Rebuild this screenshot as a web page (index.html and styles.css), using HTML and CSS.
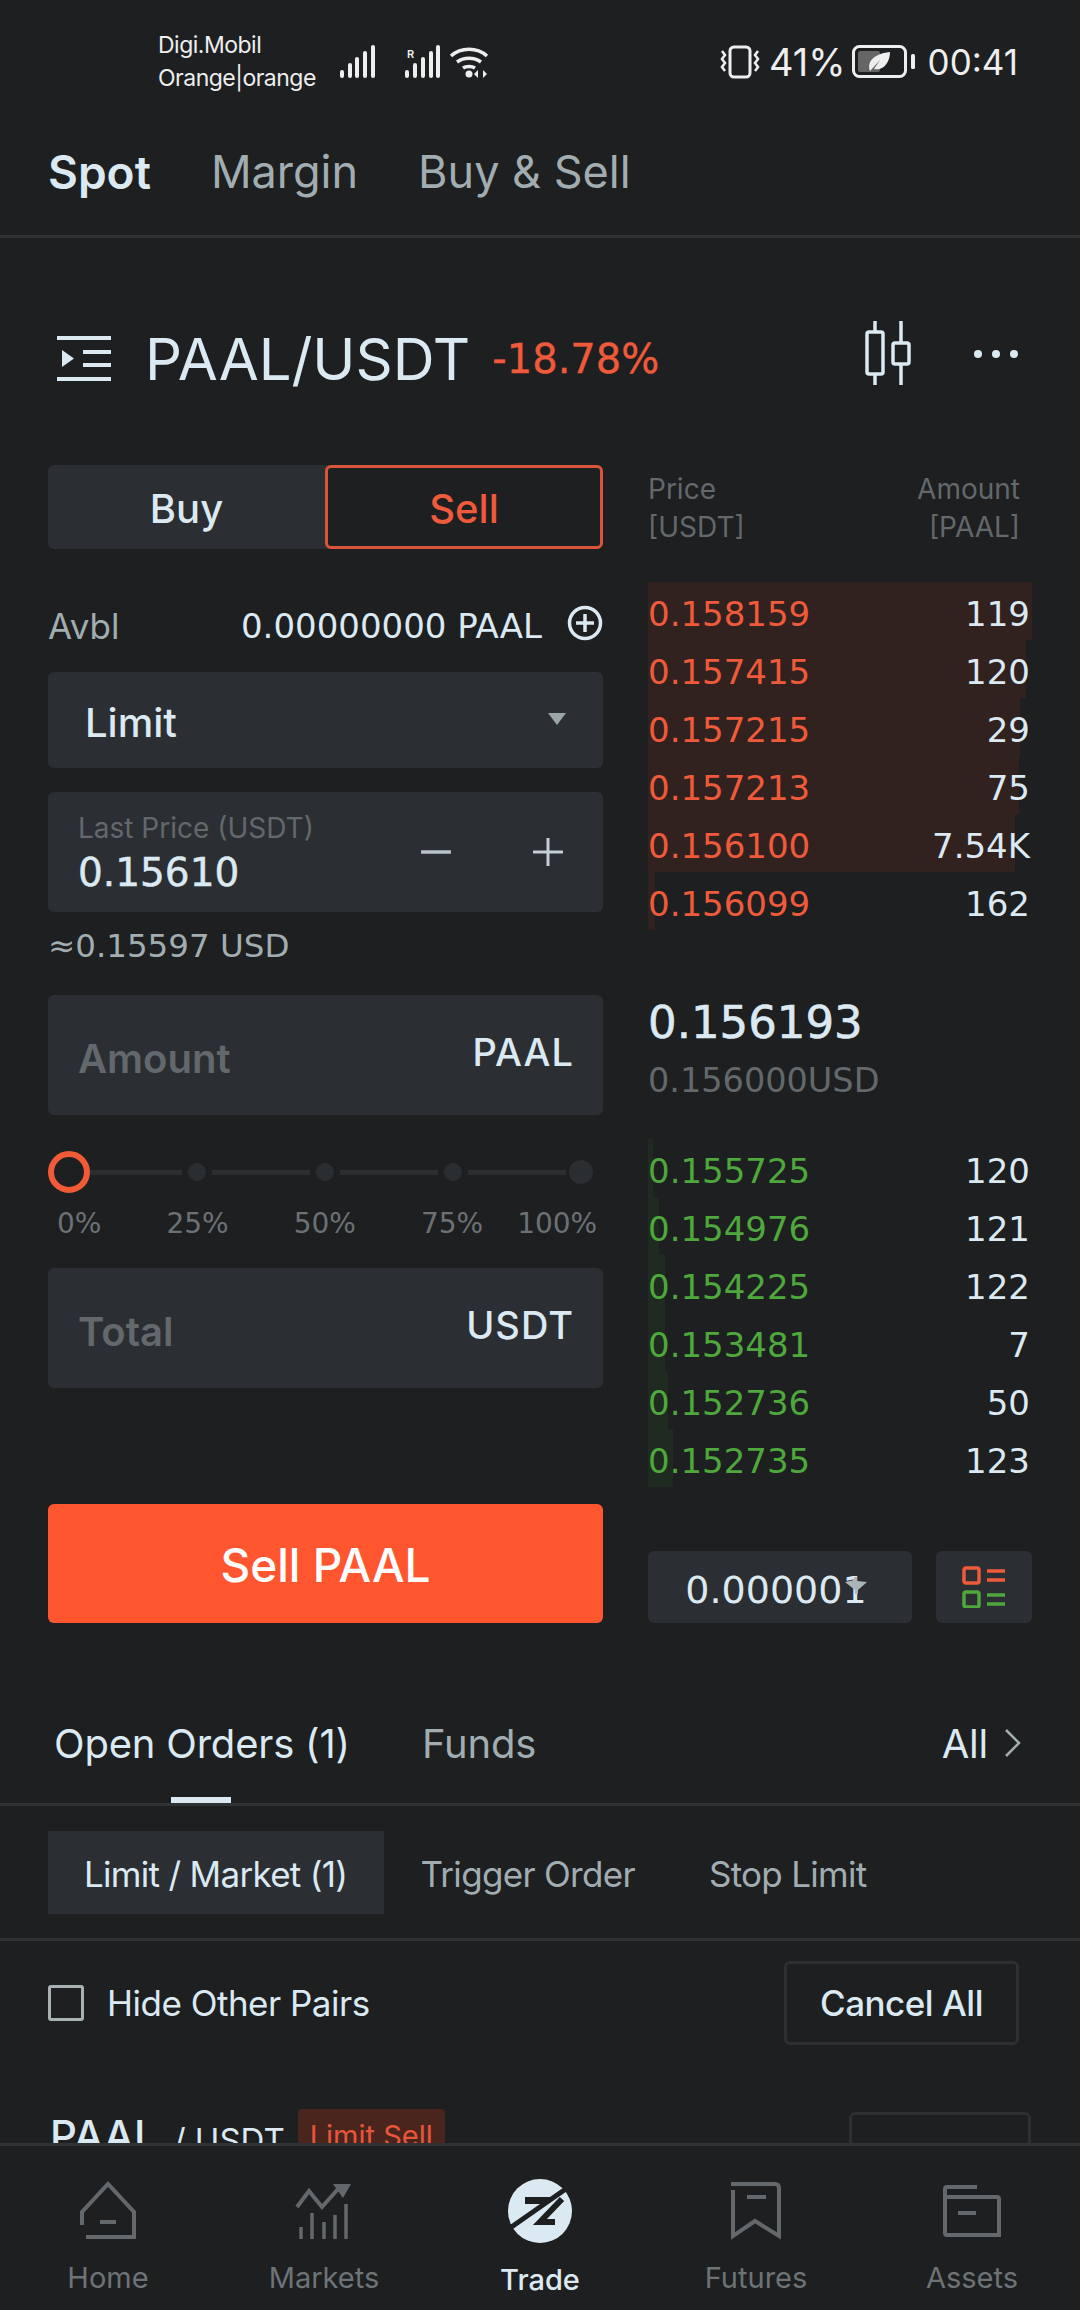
FILE: index.html
```html
<!DOCTYPE html>
<html lang="en">
<head>
  <meta charset="UTF-8" />
  <meta name="viewport" content="width=device-width, initial-scale=1.0" />
  <title>PAAL/USDT Spot</title>
  <link rel="stylesheet" href="styles.css">
</head>
<body>
  <div class="screen">
    <div class="content">
      <!-- Status bar -->
      <div class="statusbar">
        <div class="carriers">
          <div>Digi.Mobil</div>
          <div>Orange|orange</div>
        </div>
        <svg class="sb-signals" width="155" height="40" viewBox="340 42 155 40">
          <g fill="#eee">
            <rect x="340" y="70" width="4" height="8" rx="2"/>
            <rect x="348" y="63" width="4" height="15" rx="2"/>
            <rect x="355" y="57" width="4" height="21" rx="2"/>
            <rect x="363" y="51" width="4" height="27" rx="2"/>
            <rect x="371" y="45" width="4" height="33" rx="2"/>
            <rect x="405" y="70" width="4" height="8" rx="2"/>
            <rect x="413" y="63" width="4" height="15" rx="2"/>
            <rect x="421" y="57" width="4" height="21" rx="2"/>
            <rect x="429" y="51" width="4" height="27" rx="2"/>
            <rect x="436" y="45" width="4" height="33" rx="2"/>
            <circle cx="469" cy="74" r="3.5"/>
            <path d="M478 78v-8l-4 4zM483 70v8l4-4z"/>
          </g>
          <text x="407" y="58" class="sb-roam">R</text>
          <g fill="none" stroke="#eee" stroke-width="3.5">
            <path d="M451 56c10-9 26-9 36 0"/>
            <path d="M457 62c7-5 17-5 24 0"/>
            <path d="M463 68c3-2 9-2 12 0"/>
          </g>
        </svg>
        <div class="sb-right">
          <svg width="42" height="36" viewBox="724 44 42 36" fill="none" stroke="#eee" stroke-width="3">
            <rect x="735" y="47" width="20" height="30" rx="4"/>
            <path d="M727 51l3 4-3 4 3 4-3 4 3 4M763 51l-3 4 3 4-3 4 3 4-3 4" stroke-width="2.5"/>
          </svg>
          <span class="sb-pct">41%</span>
          <svg width="64" height="34" viewBox="853 46 64 34">
            <rect x="854.5" y="47.5" width="52" height="30" rx="6" fill="none" stroke="#eee" stroke-width="3"/>
            <rect x="859" y="52" width="22" height="21" rx="2" fill="#666"/>
            <path d="M871 72c-3-8 2-17 20-19 0 11-7 19-16 17l6-9-9 10z" fill="#eee"/>
            <rect x="912" y="55" width="4" height="15" rx="1.5" fill="#eee"/>
          </svg>
          <span class="sb-time">00:41</span>
        </div>
      </div>

      <!-- Product tabs -->
      <div class="top-tabs">
        <span class="active">Spot</span>
        <span>Margin</span>
        <span>Buy &amp; Sell</span>
      </div>

      <!-- Pair header -->
      <div class="pair-row">
        <svg width="54" height="46" viewBox="57 332 54 46" fill="#dbe9f2">
          <rect x="57" y="332" width="54" height="4"/>
          <rect x="83" y="346" width="28" height="4"/>
          <rect x="83" y="359" width="28" height="4"/>
          <rect x="57" y="373" width="54" height="4"/>
          <path d="M62 346l12 8.500-12 8.500z"/>
        </svg>
        <span class="pair-name">PAAL/USDT</span>
        <span class="pair-change num">-18.78%</span>
        <svg class="pair-candles" width="48" height="64" viewBox="864 322 48 64" fill="none" stroke="#dbe9f2" stroke-width="3.500">
          <rect x="867" y="333" width="16" height="42" rx="2"/>
          <path d="M875 322v11M875 375v11"/>
          <rect x="893" y="344" width="16" height="21" rx="2"/>
          <path d="M901 322v22M901 365v21"/>
        </svg>
        <div class="pair-more"><i></i><i></i><i></i></div>
      </div>

      <div class="trade">
        <!-- Order form -->
        <div class="form">
          <div class="side-switch">
            <div class="side">Buy</div>
            <div class="side sell">Sell</div>
          </div>
          <div class="avbl">
            <span class="avbl-label">Avbl</span>
            <span class="avbl-value num">0.00000000 PAAL</span>
            <svg width="36" height="36" viewBox="0 0 36 36" fill="none" stroke="#dbe9f2" stroke-width="3.500">
              <circle cx="18" cy="18" r="15.500"/>
              <path d="M18 9v18M9 18h18"/>
            </svg>
          </div>
          <div class="box select">
            <span>Limit</span>
            <i class="caret"></i>
          </div>
          <div class="box price">
            <div>
              <div class="price-label">Last Price (USDT)</div>
              <div class="price-value num">0.15610</div>
            </div>
            <div class="steppers">
              <svg width="30" height="30" viewBox="0 0 30 30"><path d="M0 15h30" stroke="#b9c2c6" stroke-width="3.500"/></svg>
              <svg width="30" height="30" viewBox="0 0 30 30"><path d="M0 15h30M15 1v28" stroke="#c5ced2" stroke-width="3"/></svg>
            </div>
          </div>
          <div class="usd-note num">≈0.15597 USD</div>
          <div class="box input">
            <span class="placeholder">Amount</span>
            <span class="unit">PAAL</span>
          </div>
          <div class="slider">
            <div class="slider-track">
              <i class="thumb"></i>
              <b class="first"></b><i class="dot"></i>
              <b></b><i class="dot"></i>
              <b></b><i class="dot"></i>
              <b></b><i class="dot end"></i>
            </div>
            <div class="slider-labels num">
              <span>0%</span><span>25%</span><span>50%</span><span>75%</span><span>100%</span>
            </div>
          </div>
          <div class="box input">
            <span class="placeholder">Total</span>
            <span class="unit">USDT</span>
          </div>
          <div class="submit">Sell PAAL</div>
        </div>

        <!-- Order book -->
        <div class="book">
          <div class="book-head">
            <div>Price<br>[USDT]</div>
            <div class="right">Amount<br>[PAAL]</div>
          </div>
          <div class="rows asks num">
            <div class="row"><i class="bar" style="width:384px"></i><span>0.158159</span><em>119</em></div>
            <div class="row"><i class="bar" style="width:378px"></i><span>0.157415</span><em>120</em></div>
            <div class="row"><i class="bar" style="width:372px"></i><span>0.157215</span><em>29</em></div>
            <div class="row"><i class="bar" style="width:371px"></i><span>0.157213</span><em>75</em></div>
            <div class="row"><i class="bar" style="width:367px"></i><span>0.156100</span><em>7.54K</em></div>
            <div class="row"><i class="bar" style="width:7px"></i><span>0.156099</span><em>162</em></div>
          </div>
          <div class="mid num">
            <div class="mid-price">0.156193</div>
            <div class="mid-usd">0.156000USD</div>
          </div>
          <div class="rows bids num">
            <div class="row"><i class="bar" style="width:5px"></i><span>0.155725</span><em>120</em></div>
            <div class="row"><i class="bar" style="width:11px"></i><span>0.154976</span><em>121</em></div>
            <div class="row"><i class="bar" style="width:17px"></i><span>0.154225</span><em>122</em></div>
            <div class="row"><i class="bar" style="width:17px"></i><span>0.153481</span><em>7</em></div>
            <div class="row"><i class="bar" style="width:20px"></i><span>0.152736</span><em>50</em></div>
            <div class="row"><i class="bar" style="width:25px"></i><span>0.152735</span><em>123</em></div>
          </div>
          <div class="book-tools">
            <div class="tick num">
              0.000001
              <svg class="tick-arrow" width="22" height="18" viewBox="0 0 22 18" fill="#aab5ba">
                <path d="M0 5l9-2V0h3v4l10 1-9 8v4h-3v-4z"/>
              </svg>
            </div>
            <div class="layout-btn">
              <svg width="44" height="42" viewBox="0 0 44 42" fill="none" stroke-width="3.500">
                <g stroke="#ef5a3a">
                  <rect x="2" y="2" width="15" height="15" rx="2"/>
                  <path d="M25 5h18M25 14h18"/>
                </g>
                <g stroke="#4ea83c">
                  <rect x="2" y="26" width="15" height="15" rx="2"/>
                  <path d="M25 29h18M25 38h18"/>
                </g>
              </svg>
            </div>
          </div>
        </div>
      </div>

      <!-- Orders panel -->
      <div class="order-tabs">
        <span class="active">Open Orders (1)</span>
        <span>Funds</span>
        <span class="order-all">All
          <svg width="18" height="28" viewBox="0 0 18 28" fill="none" stroke="#a1adb1" stroke-width="2.500"><path d="M2 1l13 13L2 27"/></svg>
        </span>
      </div>
      <div class="order-sub">
        <span class="active">Limit / Market (1)</span>
        <span>Trigger Order</span>
        <span>Stop Limit</span>
      </div>
      <div class="order-filter">
        <i class="check"></i>
        <span>Hide Other Pairs</span>
        <div class="outline-btn">Cancel All</div>
      </div>
      <div class="order-item">
        <span class="oi-base">PAAL</span>
        <span class="oi-quote">/ USDT</span>
        <span class="oi-tag">Limit Sell</span>
        <div class="oi-btn"></div>
      </div>
    </div>

    <!-- Bottom navigation -->
    <nav class="nav">
      <div class="nav-item">
        <svg width="60" height="62" viewBox="78 2179 60 62" fill="none" stroke="#62686b" stroke-width="4">
          <path d="M82 2225v-13l26-28 26 28v25H86"/>
          <path d="M100 2222h16"/>
        </svg>
        <span>Home</span>
      </div>
      <div class="nav-item">
        <svg width="60" height="62" viewBox="294 2179 60 62" fill="none" stroke="#62686b" stroke-width="4">
          <path d="M297 2207l12-16 13 16 16-18"/>
          <path d="M333 2184h18l-8 14z" fill="#62686b" stroke="none"/>
          <path d="M301 2227v12M312 2213v26M324 2222v17M335 2215v24M346 2204v35" stroke-width="3.500"/>
        </svg>
        <span>Markets</span>
      </div>
      <div class="nav-item active">
        <svg width="64" height="64" viewBox="508 2179 64 64">
          <circle cx="540" cy="2211" r="32" fill="#dbe9f2"/>
          <path d="M570 2186l-60 42" stroke="#1d1f21" stroke-width="5" fill="none"/>
          <path d="M525 2197h30l-9 7h-21z" fill="#1d1f21"/>
          <path d="M562 2199l-22 23h15" stroke="#1d1f21" stroke-width="6" fill="none"/>
        </svg>
        <span>Trade</span>
      </div>
      <div class="nav-item">
        <svg width="60" height="62" viewBox="726 2179 60 62" fill="none" stroke="#62686b" stroke-width="4">
          <path d="M731 2184h44q4 0 4 4v48l-24-15-22 15v-46"/>
          <path d="M747 2197h19"/>
        </svg>
        <span>Futures</span>
      </div>
      <div class="nav-item">
        <svg width="64" height="62" viewBox="940 2179 64 62" fill="none" stroke="#62686b" stroke-width="4">
          <path d="M977 2187h-30q-2 0-2 2v44q0 2 2 2h52v-36q0-2-2-2h-52"/>
          <path d="M958 2213h18"/>
        </svg>
        <span>Assets</span>
      </div>
    </nav>
  </div>
</body>
</html>
```

FILE: styles.css
```css
/* BASE */
* {
  margin: 0;
  padding: 0;
  box-sizing: border-box;
}
body {
  width: 1080px;
  height: 2310px;
  overflow: hidden;
  background: #1d1f21;
  color: #dbe9f2;
  font-family: "Inter", "Noto Sans", sans-serif;
}
i, em {
  font-style: normal;
}
/* figures use a face whose 1 has a foot */
.num {
  font-family: "DejaVu Sans", sans-serif;
}
.screen {
  display: flex;
  flex-direction: column;
  height: 2310px;
}
.content {
  flex: 1;
  min-height: 0;
  overflow: hidden;
}

/* STATUS BAR */
.statusbar {
  display: flex;
  align-items: center;
  height: 120px;
  padding: 4px 62px 0 158px;
  color: #eee;
}
.carriers {
  width: 182px;
  font-size: 23px;
  line-height: 33px;
  letter-spacing: -0.5px;
}
.sb-roam {
  font-size: 11px;
  font-weight: 600;
  fill: #eee;
}
.sb-right {
  display: flex;
  align-items: center;
  margin-left: auto;
  font-size: 35px;
}
.sb-pct {
  margin: 0 6px 0 8px;
  font-size: 38px;
}
.sb-time {
  margin-left: 12px;
}

/* TOP TABS */
.top-tabs {
  display: flex;
  gap: 60px;
  align-items: center;
  height: 118px;
  padding: 0 48px 12px;
  border-bottom: 3px solid #303336;
  font-size: 45px;
  color: #a1adb1;
}
.top-tabs .active {
  font-size: 46px;
  font-weight: 600;
  color: #dbe9f2;
}

/* PAIR HEADER */
.pair-row {
  display: flex;
  align-items: center;
  height: 227px;
  padding: 14px 62px 0 57px;
}
.pair-name {
  margin-left: 34px;
  font-size: 58px;
  color: #dbe9f2;
}
.pair-change {
  margin-left: 22px;
  font-size: 40px;
  -webkit-text-stroke: 0.4px #ef5a3a;
  color: #ef5a3a;
}
.pair-candles {
  margin-left: auto;
  margin-top: -12px;
}
.pair-more {
  display: flex;
  gap: 10px;
  margin-left: 62px;
  margin-top: -10px;
}
.pair-more i {
  width: 8px;
  height: 8px;
  border-radius: 50%;
  background: #dbe9f2;
}

/* TRADE LAYOUT */
.trade {
  display: grid;
  grid-template-columns: 555px 384px;
  column-gap: 45px;
  padding: 0 48px;
}

/* ORDER FORM */
.side-switch {
  display: flex;
  height: 84px;
  background: #2b2f33;
  border-radius: 6px;
}
.side {
  display: flex;
  align-items: center;
  justify-content: center;
  width: 277px;
  padding-top: 3px;
  font-size: 40px;
  font-weight: 500;
}
.side.sell {
  width: 278px;
  background: #1d1f21;
  border: 3px solid #d9553a;
  border-radius: 6px;
  color: #ef5a3a;
}
.avbl {
  display: flex;
  align-items: center;
  height: 123px;
  padding-top: 30px;
}
.avbl-label {
  font-size: 35px;
  color: #a1adb1;
}
.avbl-value {
  margin-left: auto;
  margin-right: 25px;
  font-size: 34px;
}
.avbl svg {
  margin-bottom: 6px;
}
.box {
  display: flex;
  align-items: center;
  background: #2b2f33;
  border-radius: 6px;
}
.select {
  height: 96px;
  margin-bottom: 24px;
  padding: 5px 37px 0 37px;
  font-size: 40px;
  font-weight: 500;
}
.caret {
  margin-left: auto;
  margin-bottom: 8px;
  border-left: 9px solid transparent;
  border-right: 9px solid transparent;
  border-top: 12px solid #9aa5a8;
}
.price {
  height: 120px;
  padding: 4px 40px 0 30px;
}
.price-label {
  font-size: 28px;
  line-height: 34px;
  color: #62686b;
}
.price-value {
  margin-top: 3px;
  font-size: 39px;
  line-height: 50px;
  -webkit-text-stroke: 0.5px #dbe9f2;
}
.steppers {
  display: flex;
  gap: 82px;
  margin-left: auto;
  margin-top: -4px;
}
.usd-note {
  height: 83px;
  padding-top: 15px;
  font-size: 32.500px;
  color: #a1adb1;
}
.input {
  height: 120px;
  padding: 0 29px 0 30px;
}
.placeholder {
  padding-top: 6px;
  font-size: 40px;
  font-weight: 600;
  color: #62686b;
}
.unit {
  margin-left: auto;
  padding-bottom: 6px;
  font-size: 38px;
  font-weight: 500;
  letter-spacing: 1px;
}

/* PERCENT SLIDER */
.slider {
  height: 153px;
  padding-top: 36px;
}
.slider-track {
  display: flex;
  align-items: center;
  height: 42px;
}
.slider-track b {
  width: 98px;
  height: 5px;
  background: #2b2e31;
}
.slider-track b.first {
  width: 92px;
}
.thumb {
  width: 42px;
  height: 42px;
  border: 6px solid #f05a36;
  border-radius: 50%;
}
.dot {
  width: 18px;
  height: 18px;
  margin: 0 6px;
  border-radius: 50%;
  background: #2b2e31;
}
.dot.end {
  width: 24px;
  height: 24px;
  margin: 0 0 0 3px;
}
.slider-labels {
  display: flex;
  gap: 65px;
  margin-top: 14px;
  padding-left: 9px;
  font-size: 28px;
  color: #6b7175;
}
.slider-labels span:last-child {
  margin-left: -31px;
}
.submit {
  display: flex;
  align-items: center;
  justify-content: center;
  height: 119px;
  margin-top: 116px;
  padding-top: 2px;
  background: #ff562f;
  border-radius: 6px;
  font-size: 46px;
  font-weight: 500;
  color: #fff;
}

/* ORDER BOOK */
.book-head {
  display: flex;
  justify-content: space-between;
  height: 117px;
  padding: 5px 12px 0 0;
  font-size: 28px;
  line-height: 38px;
  color: #62686b;
}
.book-head .right {
  text-align: right;
}
.row {
  position: relative;
  display: flex;
  align-items: center;
  justify-content: space-between;
  height: 58px;
  padding: 6px 2px 0 0;
  font-size: 34px;
}
.row span, .row em {
  position: relative;
}
.bar {
  position: absolute;
  top: 0;
  bottom: 0;
  left: 0;
}
.asks .bar {
  background: #32221f;
}
.bids .bar {
  background: #1f2a20;
}
.asks span {
  color: #ef5a3a;
}
.bids span {
  color: #4ea83c;
}
.row em {
  color: #dbe9f2;
}
.mid {
  height: 209px;
  padding-top: 67px;
}
.mid-price {
  font-size: 45px;
  line-height: 52px;
  -webkit-text-stroke: 0.6px #dbe9f2;
}
.mid-usd {
  margin-top: 12px;
  font-size: 33.500px;
  color: #62686b;
}
.book-tools {
  display: flex;
  gap: 24px;
  margin-top: 64px;
}
.tick {
  position: relative;
  display: flex;
  align-items: center;
  justify-content: center;
  width: 264px;
  height: 72px;
  padding: 6px 8px 0 0;
  background: #2b2f33;
  border-radius: 6px;
  font-size: 38px;
}
.tick-arrow {
  position: absolute;
  right: 45px;
  top: 26px;
}
.layout-btn {
  display: flex;
  align-items: center;
  justify-content: center;
  width: 96px;
  height: 72px;
  background: #2b2f33;
  border-radius: 6px;
}

/* ORDERS PANEL */
.order-tabs {
  display: flex;
  align-items: center;
  gap: 72px;
  position: relative;
  height: 183px;
  padding: 60px 58px 0 54px;
  border-bottom: 3px solid #303336;
  font-size: 40px;
  letter-spacing: -0.2px;
  color: #a1adb1;
}
.order-tabs .active {
  color: #dbe9f2;
}
.order-tabs .active::after {
  content: "";
  position: absolute;
  left: 171px;
  bottom: 0;
  width: 60px;
  height: 6px;
  background: #dbe9f2;
}
.order-all {
  display: flex;
  align-items: center;
  gap: 16px;
  margin-left: auto;
  color: #dbe9f2;
}
.order-sub {
  display: flex;
  align-items: center;
  height: 135px;
  padding: 0 48px 0;
  border-bottom: 3px solid #303336;
  font-size: 35px;
  letter-spacing: -0.7px;
  color: #a1adb1;
}
.order-sub span {
  margin-right: 74px;
  padding-top: 3px;
}
.order-sub .active {
  display: flex;
  align-items: center;
  height: 83px;
  margin-right: 36px;
  padding: 3px 37px 0 36px;
  background: #2b2f33;
  color: #dbe9f2;
}
.order-filter {
  display: flex;
  align-items: center;
  height: 124px;
  padding: 0 61px 0 48px;
  font-size: 35px;
  letter-spacing: -0.5px;
  color: #dbe9f2;
}
.check {
  width: 36px;
  height: 36px;
  margin-right: 23px;
  border: 3px solid #a8b2b5;
  border-radius: 3px;
}
.outline-btn {
  display: flex;
  align-items: center;
  justify-content: center;
  width: 235px;
  height: 84px;
  margin-left: auto;
  border: 3px solid #2d3033;
  border-radius: 6px;
  font-weight: 500;
}
.order-item {
  display: flex;
  align-items: flex-start;
  padding: 44px 49px 0 50px;
}
.oi-base {
  margin-top: 1px;
  font-size: 42px;
  font-weight: 500;
}
.oi-quote {
  margin-top: 11px;
  margin-left: 16px;
  font-size: 33px;
}
.oi-tag {
  margin-left: 13px;
  padding: 9px 12px 20px;
  background: #4a251e;
  border-radius: 4px;
  font-size: 29px;
  color: #e8553a;
}
.oi-btn {
  width: 182px;
  height: 84px;
  margin-top: 3px;
  margin-left: auto;
  border: 3px solid #2d3033;
  border-radius: 6px;
}

/* BOTTOM NAV */
.nav {
  display: grid;
  grid-template-columns: repeat(5, 1fr);
  height: 167px;
  padding-top: 33px;
  border-top: 3px solid #303336;
  background: #1d1f21;
}
.nav-item {
  display: flex;
  flex-direction: column;
  align-items: center;
  font-size: 29px;
  color: #6d7376;
}
.nav-item span {
  margin-top: 19px;
}
.nav-item.active {
  color: #dde9f0;
  font-weight: 500;
}
```
